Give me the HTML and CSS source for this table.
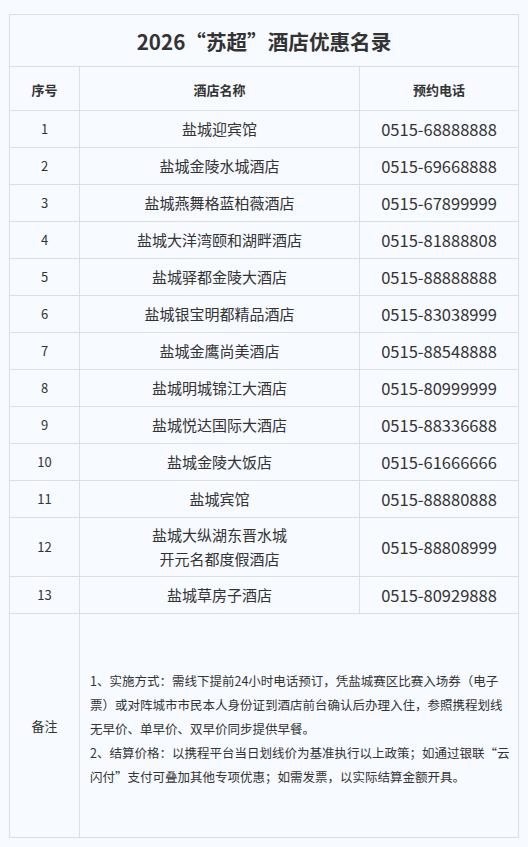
FILE: index.html
```html
<!DOCTYPE html>
<html lang="zh-CN">
<head>
<meta charset="utf-8">
<title>2026“苏超”酒店优惠名录</title>
<link rel="stylesheet" href="styles.css">
</head>
<body>
<div class="page">
  <table class="hotels">
    <colgroup>
      <col class="col-no">
      <col class="col-name">
      <col class="col-phone">
    </colgroup>
    <thead>
      <tr><th colspan="3" class="title">2026“苏超”酒店优惠名录</th></tr>
      <tr class="head"><th>序号</th><th>酒店名称</th><th>预约电话</th></tr>
    </thead>
    <tbody>
      <tr><td class="no">1</td><td class="name">盐城迎宾馆</td><td class="phone">0515-68888888</td></tr>
      <tr><td class="no">2</td><td class="name">盐城金陵水城酒店</td><td class="phone">0515-69668888</td></tr>
      <tr><td class="no">3</td><td class="name">盐城燕舞格蓝柏薇酒店</td><td class="phone">0515-67899999</td></tr>
      <tr><td class="no">4</td><td class="name">盐城大洋湾颐和湖畔酒店</td><td class="phone">0515-81888808</td></tr>
      <tr><td class="no">5</td><td class="name">盐城驿都金陵大酒店</td><td class="phone">0515-88888888</td></tr>
      <tr><td class="no">6</td><td class="name">盐城银宝明都精品酒店</td><td class="phone">0515-83038999</td></tr>
      <tr><td class="no">7</td><td class="name">盐城金鹰尚美酒店</td><td class="phone">0515-88548888</td></tr>
      <tr><td class="no">8</td><td class="name">盐城明城锦江大酒店</td><td class="phone">0515-80999999</td></tr>
      <tr><td class="no">9</td><td class="name">盐城悦达国际大酒店</td><td class="phone">0515-88336688</td></tr>
      <tr><td class="no">10</td><td class="name">盐城金陵大饭店</td><td class="phone">0515-61666666</td></tr>
      <tr><td class="no">11</td><td class="name">盐城宾馆</td><td class="phone">0515-88880888</td></tr>
      <tr class="tall"><td class="no">12</td><td class="name">盐城大纵湖东晋水城<br>开元名都度假酒店</td><td class="phone">0515-88808999</td></tr>
      <tr><td class="no">13</td><td class="name">盐城草房子酒店</td><td class="phone">0515-80929888</td></tr>
      <tr class="notes">
        <td class="no">备注</td>
        <td colspan="2" class="note-text">1、实施方式：需线下提前24小时电话预订，凭盐城赛区比赛入场券（电子<br>票）或对阵城市市民本人身份证到酒店前台确认后办理入住，参照携程划线<br>无早价、单早价、双早价同步提供早餐。<br>2、结算价格：以携程平台当日划线价为基准执行以上政策；如通过银联“云<br>闪付”支付可叠加其他专项优惠；如需发票，以实际结算金额开具。</td>
      </tr>
    </tbody>
  </table>
</div>
</body>
</html>
```

FILE: styles.css
```css
html, body {
  margin: 0;
  padding: 0;
  background: #f7faff;
}

body {
  font-family: "Noto Sans CJK SC", "Noto Sans", sans-serif;
  color: #333333;
}

.page {
  padding: 14px 0 9px 9px;
}

.hotels {
  width: 509px;
  border-collapse: collapse;
  table-layout: fixed;
}

.col-no { width: 70px; }
.col-name { width: 280px; }
.col-phone { width: 159px; }

.hotels th,
.hotels td {
  border: 1px solid #dcdee2;
  text-align: center;
  vertical-align: middle;
  padding: 6px 8px;
  line-height: 24px;
}

.hotels th.title {
  font-size: 20.6px;
  font-weight: bold;
  line-height: 30px;
  padding: 11px 8px 10px;
  color: #333;
}

.head th {
  font-size: 13px;
  font-weight: bold;
  padding: 11px 8px 8px;
}

.no {
  font-size: 13px;
}

.name {
  font-size: 15px;
}

.phone {
  font-size: 16.5px;
}

.tall td {
  padding-top: 5px;
  padding-bottom: 5px;
}

.notes td {
  height: 211px;
}

.hotels td.note-text {
  text-align: left;
  font-size: 12.5px;
  padding: 6px 4px 0 10px;
  white-space: nowrap;
}
```
